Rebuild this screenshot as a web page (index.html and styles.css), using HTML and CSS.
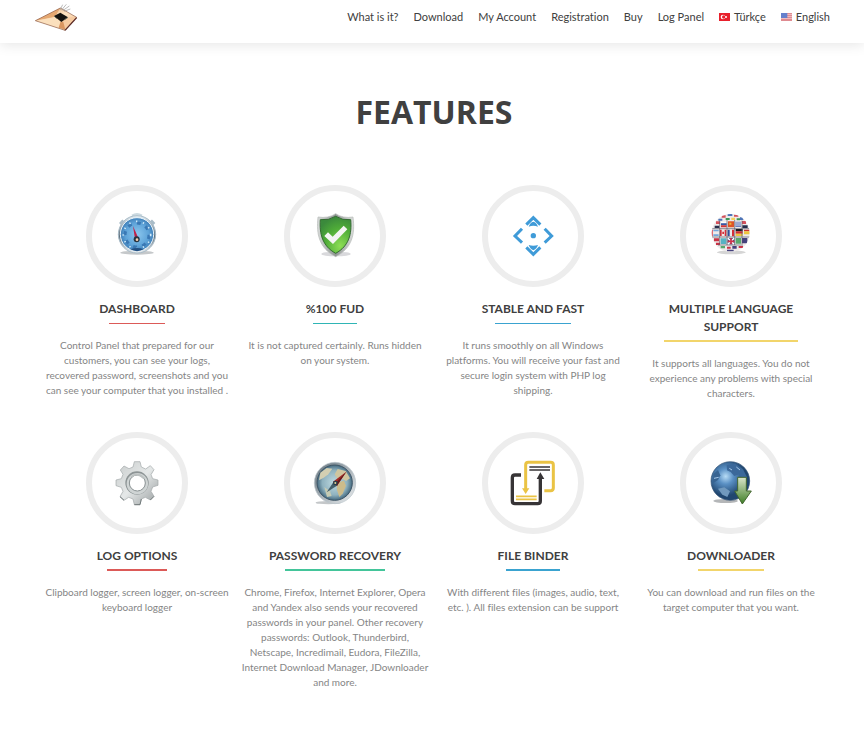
FILE: index.html
```html
<!DOCTYPE html>
<html lang="en">
<head>
    <meta charset="UTF-8">
    <meta name="viewport" content="width=device-width, initial-scale=1.0">
    <title>Features</title>
    <link rel="stylesheet" href="styles.css">
</head>
<body>
    <header class="header">
        <a href="#" class="logo" aria-label="Home">
            <svg viewBox="102 9 132 90" width="44" height="30">
                <defs>
                    <linearGradient id="paper" x1="0" y1="0" x2="1" y2="1">
                        <stop offset="0" stop-color="#e9a565"/>
                        <stop offset=".5" stop-color="#fde3c2"/>
                        <stop offset="1" stop-color="#f0b27c"/>
                    </linearGradient>
                </defs>
                <path d="M106 62L181 24L230 52L195 91Z" fill="url(#paper)"/>
                <path d="M106 62L165 50L181 24Z" fill="#e5a871"/>
                <path d="M106 62L168 52L187 64L195 91Z" fill="#fbe0bd"/>
                <path d="M187 64L203 52L230 52L195 91Z" fill="#f6caa0"/>
                <path d="M182 64L190 66L196 89L176 83Z" fill="#d99560"/>
                <path d="M106 62L181 24L230 52L195 91Z" fill="none" stroke="#8b5a48" stroke-width="2"/>
                <path d="M195 91L230 53" stroke="#5d2d28" stroke-width="4"/>
                <path d="M162 48L181 38L204 52L184 66Z" fill="#15130f"/>
                <path d="M162 48L170 56M204 52L194 59" stroke="#6b7060" stroke-width="3"/>
                <path d="M180 30L188 14M184 31L199 13M188 32L208 18M192 34L211 27" stroke="#999" stroke-width="2"/>
            </svg>
        </a>
        <nav class="nav">
            <a href="#">What is it?</a>
            <a href="#">Download</a>
            <a href="#">My Account</a>
            <a href="#">Registration</a>
            <a href="#">Buy</a>
            <a href="#">Log Panel</a>
            <a href="#" class="lang">
                <svg class="flag" viewBox="0 0 33 24" width="11" height="8">
                    <path fill="#e8202c" d="M0 0h33v24H0z"/>
                    <circle cx="12" cy="12" r="7" fill="#fff"/>
                    <circle cx="14" cy="12" r="5" fill="#e8202c"/>
                    <circle cx="21" cy="12" r="3" fill="#fff"/>
                </svg>
                Türkçe
            </a>
            <a href="#" class="lang">
                <svg class="flag" viewBox="0 0 33 24" width="11" height="8">
                    <path fill="#f3c9ca" d="M0 0h33v24H0z"/>
                    <path d="M0 1h33M0 7h33M0 13h33M0 19h33M0 23h33" stroke="#dc7f86" stroke-width="3"/>
                    <path fill="#6580cc" d="M0 0h19v15H0z"/>
                </svg>
                English
            </a>
        </nav>
    </header>

    <main class="features">
        <h1>Features</h1>
        <div class="grid">
            <section class="item red thin">
                <div class="circle">
                    <svg viewBox="99 96 144 144" width="48" height="48">
                        <defs>
                            <linearGradient id="chrome" x1="0" y1="0" x2="0" y2="1">
                                <stop offset="0" stop-color="#e9f1f5"/>
                                <stop offset=".55" stop-color="#5b6c79"/>
                                <stop offset="1" stop-color="#f4f6f7"/>
                            </linearGradient>
                            <radialGradient id="dial">
                                <stop offset="0" stop-color="#8cc7ee"/>
                                <stop offset=".7" stop-color="#5ea3d8"/>
                                <stop offset="1" stop-color="#3f7fb8"/>
                            </radialGradient>
                        </defs>
                        <ellipse cx="171" cy="218" rx="50" ry="6" fill="#c5c8ca"/>
                        <path d="M120 132L130 121M223 132L213 121" stroke="#a9bcc8" stroke-width="8"/>
                        <path d="M156 107Q171 98 186 107" fill="none" stroke="#cbd9e0" stroke-width="7"/>
                        <circle cx="171" cy="163" r="56" fill="url(#chrome)" stroke="#a7bbc8" stroke-width="3"/>
                        <circle cx="171" cy="163" r="50" fill="url(#dial)" stroke="#e7f4fc" stroke-width="3"/>
                        <circle cx="171" cy="165" r="36" fill="none" stroke="#3a78b4" stroke-width="9" stroke-dasharray="12 16"/>
                        <circle cx="171" cy="165" r="41" fill="none" stroke="#d5edfb" stroke-width="5" stroke-dasharray="4 17"/>
                        <path d="M151 208Q171 200 191 208Q171 219 151 208Z" fill="#225083"/>
                        <path d="M159 138L175 174L165 177Z" fill="#c02148"/>
                        <circle cx="170" cy="178" r="9" fill="#283440"/>
                        <circle cx="171" cy="179" r="4" fill="#f7cfaf"/>
                    </svg>
                </div>
                <h2>Dashboard</h2>
                <p>Control Panel that prepared for our customers, you can see your logs, recovered password, screenshots and you can see your computer that you installed .</p>
            </section>
            <section class="item teal thin">
                <div class="circle">
                    <svg viewBox="99 96 144 144" width="48" height="48">
                        <defs>
                            <radialGradient id="green" cx=".65" cy=".8" r=".8">
                                <stop offset="0" stop-color="#8dde55"/>
                                <stop offset=".6" stop-color="#4fac38"/>
                                <stop offset="1" stop-color="#3b8a3c"/>
                            </radialGradient>
                            <linearGradient id="rim">
                                <stop offset="0" stop-color="#d7dad9"/>
                                <stop offset=".5" stop-color="#8f9593"/>
                                <stop offset="1" stop-color="#dcdedd"/>
                            </linearGradient>
                        </defs>
                        <ellipse cx="174" cy="222" rx="44" ry="7" fill="#d9d9dc"/>
                        <path d="M173 101Q195 116 225 111C232 163 222 205 173 230C124 205 114 163 120 111Q151 116 173 101Z" fill="url(#rim)" stroke="#b5b9b7" stroke-width="2"/>
                        <path d="M173 109Q194 122 218 119C222 162 213 198 173 220C133 198 124 162 127 119Q152 122 173 109Z" fill="url(#green)" stroke="#346c31" stroke-width="3"/>
                        <path d="M139 168L150 157L164 170L197 137L208 148L165 192Z" fill="#f4f5f4"/>
                    </svg>
                </div>
                <h2>%100 FUD</h2>
                <p>It is not captured certainly. Runs hidden on your system.</p>
            </section>
            <section class="item blue thin">
                <div class="circle">
                    <svg viewBox="99 96 144 144" width="48" height="48" fill="#3f9bd8">
                        <g fill="none" stroke="#3f9bd8" stroke-width="9">
                            <path d="M151 134L172 113L193 134"/>
                            <path d="M151 202L172 223L193 202"/>
                            <path d="M138 146L117 168L138 188"/>
                            <path d="M206 146L227 168L206 188"/>
                        </g>
                        <path d="M158 140Q163 127 172 125Q181 127 186 140Q172 135 158 140Z"/>
                        <path d="M158 195Q172 200 186 195Q181 208 172 211Q163 208 158 195Z"/>
                        <circle cx="172" cy="167" r="8"/>
                    </svg>
                </div>
                <h2>Stable and fast</h2>
                <p>It runs smoothly on all Windows platforms. You will receive your fast and secure login system with PHP log shipping.</p>
            </section>
            <section class="item yellow">
                <div class="circle">
                    <svg viewBox="141 96 144 144" width="48" height="48">
                        <defs>
                            <clipPath id="ball"><circle cx="212" cy="159" r="57"/></clipPath>
                        </defs>
                        <ellipse cx="214" cy="217" rx="43" ry="6" fill="#d5d5d5"/>
                        <g clip-path="url(#ball)">
                            <path fill="#eeeaea" d="M150 100h124v120H150z"/>
                            <!-- top rows -->
                            <path fill="#d4505b" d="M185 106h12v7h-12zM222 104h13v6h-13zM168 124h12v8h-12zM246 123h12v9h-12z"/>
                            <path fill="#4d74b8" d="M203 102h14v6h-14zM240 112h10v8h-10zM175 116h12v6h-12z"/>
                            <path fill="#3f9658" d="M197 114h12v6h-12zM230 115h10v6h-10z"/>
                            <path fill="#f3d157" d="M214 113h11v7h-11z"/>
                            <path fill="#fff" d="M183 125h17v5h-17z"/>
                            <path fill="#3657a6" d="M183 130h17v6h-17z"/>
                            <path fill="#d23638" d="M183 136h17v6h-17z"/>
                            <path fill="#dc5428" d="M204 124h18v18h-18z"/>
                            <path fill="#f1bb36" d="M208 128h6v6h-6z"/>
                            <path fill="#6c80bc" d="M226 125h17v16h-17z"/>
                            <path d="M226 129h17M226 135h17" stroke="#fff" stroke-width="2"/>
                            <path fill="#272e4b" d="M247 136h16v8h-16zM164 137h14v7h-14z"/>
                            <!-- middle row -->
                            <path fill="#72a7dc" d="M160 149h16v5h-16zM160 163h16v5h-16z"/>
                            <path fill="#d32f3a" d="M154 149h4v20h-4zM180 149h5v19h-5zM194 149h5v19h-5zM187 155h5v7h-5zM216 149h6v20h-6z"/>
                            <path fill="#304f9a" d="M203 149h6v20h-6z"/>
                            <path fill="#17191d" d="M227 147h21v7h-21z"/>
                            <path fill="#cf2f2f" d="M227 154h21v7h-21zM252 149h17v5h-17z"/>
                            <path fill="#edc640" d="M227 161h21v7h-21zM252 154h17v9h-17z"/>
                            <!-- bottom rows -->
                            <path fill="#c93346" d="M162 175h15v9h-15zM168 188h12v7h-12zM201 200h11v6h-11zM236 198h13v6h-13z"/>
                            <path fill="#58b2c4" d="M182 175h17v17h-17z"/>
                            <path fill="#293c84" d="M203 174h20v19h-20z"/>
                            <path d="M203 174L223 193M223 174L203 193" stroke="#fff" stroke-width="5"/>
                            <path d="M213 174v19M203 184h20" stroke="#ce3349" stroke-width="5"/>
                            <path fill="#58a96f" d="M227 174h16v17h-16zM182 198h13v7h-13z"/>
                            <path fill="#43417d" d="M246 174h16v16h-16zM217 198h13v8h-13zM201 209h20v5h-20z"/>
                            <path d="M150 146h124M150 171h124M174 195h75M201 120v75M224 120v75M179 122v70M246 122v70" stroke="#585865" stroke-width="2"/>
                        </g>
                    </svg>
                </div>
                <h2>Multiple language support</h2>
                <p>It supports all languages. You do not experience any problems with special characters.</p>
            </section>
            <section class="item red">
                <div class="circle">
                    <svg viewBox="99 93 144 144" width="48" height="48">
                        <defs>
                            <linearGradient id="steel" x1="0" y1="0" x2="1" y2="1">
                                <stop offset="0" stop-color="#c8cccc"/>
                                <stop offset=".5" stop-color="#e5e8e8"/>
                                <stop offset="1" stop-color="#989e9f"/>
                            </linearGradient>
                        </defs>
                        <path fill="url(#steel)" stroke="#a0a6a7" stroke-width="2" d="M163 101H180L184 117L197 123L211 113L222 125L213 140L218 152L234 156V172L218 177L213 190L222 205L211 216L196 208L184 213L180 230H163L159 213L146 208L132 217L120 206L129 190L124 178L108 173V156L124 152L129 139L121 126L132 114L147 122L159 117Z"/>
                        <path d="M163 230H180L184 213M211 216L222 205M120 206L132 217" fill="none" stroke="#737b7c" stroke-width="3"/>
                        <circle cx="171" cy="165" r="35" fill="#8d9495"/>
                        <circle cx="172" cy="167" r="32" fill="#cfd4d4"/>
                        <circle cx="172" cy="165" r="24" fill="#fff" stroke="#889091" stroke-width="3"/>
                        <path d="M154 147Q171 130 192 151" fill="none" stroke="#bcc1c1" stroke-width="6"/>
                    </svg>
                </div>
                <h2>Log options</h2>
                <p>Clipboard logger, screen logger, on-screen keyboard logger</p>
            </section>
            <section class="item green">
                <div class="circle">
                    <svg viewBox="99 93 144 144" width="48" height="48">
                        <defs>
                            <radialGradient id="sea">
                                <stop offset="0" stop-color="#c0dbe2"/>
                                <stop offset=".7" stop-color="#8fb2bf"/>
                                <stop offset="1" stop-color="#456a80"/>
                            </radialGradient>
                            <linearGradient id="ring" x1="0" y1="0" x2="1" y2="1">
                                <stop offset="0" stop-color="#63727c"/>
                                <stop offset="1" stop-color="#edf0f2"/>
                            </linearGradient>
                        </defs>
                        <ellipse cx="151" cy="224" rx="38" ry="5" fill="#c4c7c9"/>
                        <circle cx="171" cy="165" r="62" fill="url(#ring)" stroke="#bac4ca" stroke-width="2"/>
                        <circle cx="170" cy="164" r="53" fill="url(#sea)" stroke="#3f5666" stroke-width="3"/>
                        <path d="M127 134L146 120L163 122L151 139L137 149L123 157Z" fill="#d3cfb2"/>
                        <path d="M179 123L203 129L216 151L204 159L190 151L178 153L170 139Z" fill="#d0c6a0"/>
                        <path d="M176 164L198 158L204 173L194 197L184 207L177 186Z" fill="#cdbc8b"/>
                        <path d="M139 177L156 190L161 204L147 207Z" fill="#c6cbb3"/>
                        <path d="M146 193L168 160L179 172Z" fill="#445f6b"/>
                        <path d="M205 131L165 161L177 173Z" fill="#a22d28"/>
                        <path d="M205 131L171 167L177 173Z" fill="#651b1e"/>
                        <circle cx="172" cy="165" r="7" fill="#273f4c"/>
                        <circle cx="172" cy="165" r="3" fill="#e5ce91"/>
                    </svg>
                </div>
                <h2>Password recovery</h2>
                <p>Chrome, Firefox, Internet Explorer, Opera and Yandex also sends your recovered passwords in your panel. Other recovery passwords: Outlook, Thunderbird, Netscape, Incredimail, Eudora, FileZilla, Internet Download Manager, JDownloader and more.</p>
            </section>
            <section class="item blue">
                <div class="circle">
                    <svg viewBox="99 93 144 144" width="48" height="48">
                        <g fill="none" stroke-width="9">
                            <path d="M149 184V111Q149 103 157 103H224Q232 103 232 111V180Q232 188 224 188H205" stroke="#eac344"/>
                            <path d="M135 141H117Q109 141 109 149V219Q109 227 117 227H185Q193 227 193 219V149" stroke="#373436" stroke-width="10"/>
                        </g>
                        <path d="M138 181H160L149 198Z" fill="#eac344"/>
                        <path d="M182 153H205L193 133Z" fill="#373436"/>
                        <path d="M160 117H222M160 126H222" stroke="#373436" stroke-width="5"/>
                        <path d="M120 205H182M120 214H182" stroke="#eac344" stroke-width="5"/>
                    </svg>
                </div>
                <h2>File binder</h2>
                <p>With different files (images, audio, text, etc. ). All files extension can be support</p>
            </section>
            <section class="item yellow">
                <div class="circle">
                    <svg viewBox="99 93 144 144" width="48" height="48">
                        <defs>
                            <radialGradient id="earth" cx=".38" cy=".38">
                                <stop offset="0" stop-color="#b7dcf6"/>
                                <stop offset=".4" stop-color="#5a90c4"/>
                                <stop offset="1" stop-color="#20466f"/>
                            </radialGradient>
                            <linearGradient id="arrow" x1="0" y1="0" x2="0" y2="1">
                                <stop offset="0" stop-color="#dbe5cb"/>
                                <stop offset="1" stop-color="#3e7e26"/>
                            </linearGradient>
                        </defs>
                        <ellipse cx="155" cy="219" rx="37" ry="6" fill="#b4b6b8"/>
                        <circle cx="169" cy="159" r="58" fill="url(#earth)" stroke="#315073" stroke-width="2"/>
                        <path d="M158 111L184 107L207 124L219 148L205 153L195 139L181 144L170 132L159 127Z" fill="#3b689a"/>
                        <path d="M118 138L132 126L139 142L132 156L117 166Z" fill="#386492"/>
                        <path d="M132 182L151 178L168 190L160 207L145 200Z" fill="#7199bd"/>
                        <path d="M166 121L174 126M187 117L198 126M120 151L134 148" stroke="#a8caea" stroke-width="3"/>
                        <path d="M191 148H217V189H232L205 228L182 189H191Z" fill="url(#arrow)" stroke="#42662f" stroke-width="3"/>
                    </svg>
                </div>
                <h2>Downloader</h2>
                <p>You can download and run files on the target computer that you want.</p>
            </section>
        </div>
    </main>
</body>
</html>
```
FILE: styles.css
```css
* {
    margin: 0;
    padding: 0;
    box-sizing: border-box;
}

body {
    font-family: Lato, sans-serif;
    font-variant-ligatures: none;
    background: #fff;
    color: #404040;
}

.header {
    display: flex;
    justify-content: space-between;
    align-items: flex-start;
    padding: 3px 34px 10px;
    box-shadow: 0 2px 12px rgba(0, 0, 0, 0.1);
}

.logo svg,
.circle svg {
    display: block;
}

.nav {
    display: flex;
    gap: 15px;
    padding-top: 5px;
    font-size: 11px;
    line-height: 18px;
}

.nav a {
    color: #404040;
    text-decoration: none;
}

.lang {
    display: flex;
    align-items: center;
    gap: 4px;
}

.features {
    padding: 47px 34px 50px 38px;
    text-align: center;
}

.features h1 {
    font-family: "Open Sans", sans-serif;
    font-size: 32px;
    line-height: 44px;
    font-weight: 700;
    text-transform: uppercase;
    margin-bottom: 51px;
}

.grid {
    display: grid;
    grid-template-columns: repeat(4, 1fr);
    row-gap: 31px;
}

.item {
    padding: 0 4px;
}

.circle {
    display: flex;
    align-items: center;
    justify-content: center;
    width: 102px;
    height: 102px;
    margin: 0 auto 13px;
    border: 6px solid #ededed;
    border-radius: 50%;
}

.item h2 {
    display: inline-block;
    font-size: 12px;
    line-height: 18px;
    font-weight: 700;
    text-transform: uppercase;
    vertical-align: top;
    margin: 0 6px 13px;
}

/* coloured line under the title */
.item h2::after {
    content: "";
    display: block;
    width: 75%;
    height: 2px;
    margin: 4px auto 1px;
}

.thin h2::after {
    height: 1px;
    margin-top: 5px;
}

.red h2::after {
    background: #dc5a58;
}

.teal h2::after {
    background: #2fb5b5;
}

.blue h2::after {
    background: #3aa3d0;
}

.green h2::after {
    background: #43c59a;
}

.yellow h2::after {
    background: #f2d56b;
}

.item p {
    font-size: 10px;
    line-height: 15px;
    color: #858585;
}

.thin p {
    padding: 0 2px;
}

@media (max-width: 700px) {
    .header {
        flex-wrap: wrap;
    }
    .nav {
        flex-wrap: wrap;
    }
    .grid {
        grid-template-columns: repeat(2, 1fr);
    }
}
```
